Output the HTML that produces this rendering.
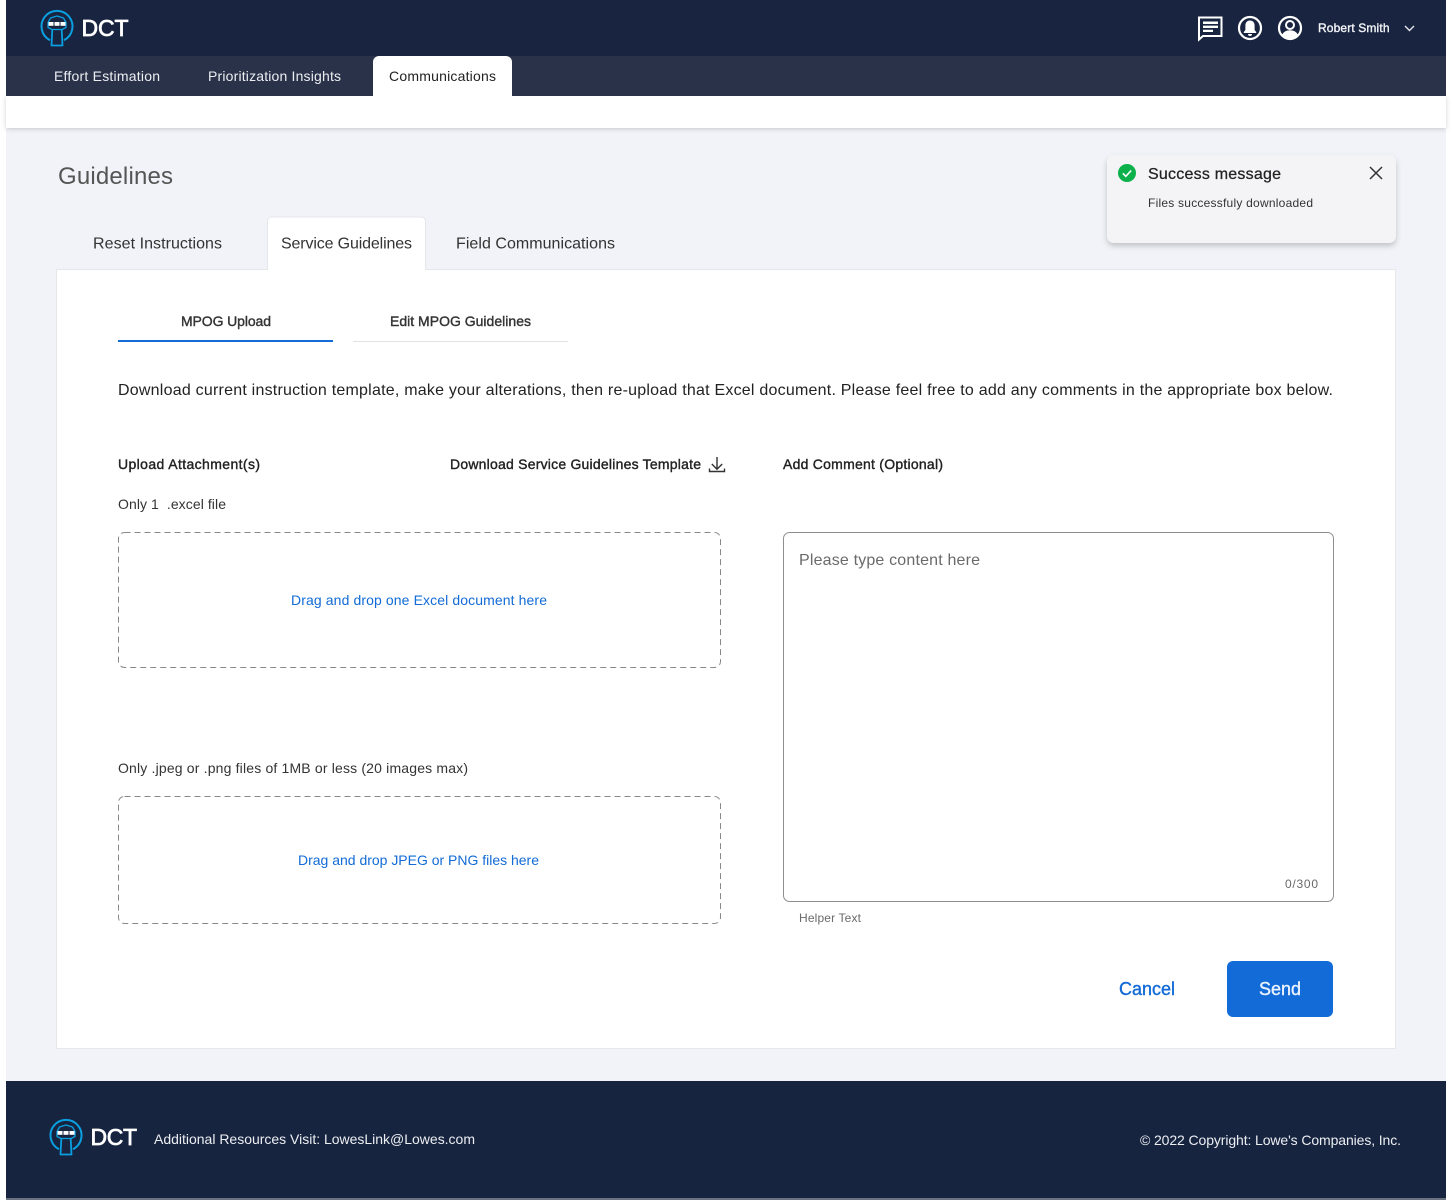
<!DOCTYPE html>
<html lang="en"><head><meta charset="utf-8"><title>Guidelines</title>
<style>
html,body{margin:0;padding:0;background:#fff;width:1452px;height:1200px;overflow:hidden}
body{position:relative;font-family:"Liberation Sans",sans-serif}
svg{position:absolute;left:0;top:0}
text{font-family:"Liberation Sans",sans-serif;white-space:pre}
.m{stroke:currentColor;stroke-width:.25px}
.b{stroke:currentColor;stroke-width:.38px}
.d{stroke:currentColor;stroke-width:.7px}
</style></head><body>
<svg width="1452" height="1200" viewBox="0 0 1452 1200" xmlns="http://www.w3.org/2000/svg">
<defs>
<filter id="s1" x="-5%" y="-50%" width="110%" height="200%"><feDropShadow dx="0" dy="1" stdDeviation="2.5" flood-color="#000" flood-opacity=".18"/></filter>
<filter id="s2" x="-10%" y="-20%" width="120%" height="150%"><feDropShadow dx="0" dy="3" stdDeviation="3" flood-color="#000" flood-opacity=".2"/></filter>
<g id="logo">
<path d="M-7 14.200A15.500 15.500 0 1 1 7 14.200" fill="none" stroke="#0a9fe0" stroke-width="2"/>
<path d="M-4.500 0H4.500L5.500 19.500H-5.500Z" fill="#182440" stroke="#0a9fe0" stroke-width="1.800" stroke-linejoin="round"/>
<path d="M-9 -3.500L-6.500 -8L0 -10L6.500 -8L9 -3.500V1.500L5 3.500H-5L-9 1.500Z" fill="#182440" stroke="#0a9fe0" stroke-width="1.300" stroke-linejoin="round"/>
<rect x="-8.500" y="-4" width="5" height="3.800" fill="#fff"/><rect x="-2.500" y="-4" width="5" height="3.800" fill="#fff"/><rect x="3.500" y="-4" width="5" height="3.800" fill="#fff"/>
</g>
</defs>
<rect x="6" y="0" width="1440" height="1200" fill="#f1f3f8"/>
<rect x="6" y="0" width="1440" height="56" fill="#182440"/>
<rect x="6" y="96" width="1440" height="32" fill="#fff" filter="url(#s1)"/>
<rect x="6" y="56" width="1440" height="40" fill="#293248"/>
<path d="M373 96V62a6 6 0 0 1 6-6H506a6 6 0 0 1 6 6V96Z" fill="#fff"/>

<use href="#logo" x="57" y="26"/>
<text class="d" x="81.500" y="36" font-size="23" fill="#fff" color="#fff" textLength="47">DCT</text>
<text x="54" y="81" font-size="14" fill="#eceef2" textLength="106">Effort Estimation</text>
<text x="208" y="81" font-size="14" fill="#eceef2" textLength="133">Prioritization Insights</text>
<text x="389" y="81" font-size="14" fill="#222" textLength="107">Communications</text>

<!-- header icons -->
<path d="M1199 17.500H1221.500V36H1203L1199 39.500Z" fill="none" stroke="#fff" stroke-width="2"/>
<path d="M1203 21.500H1218V24H1203ZM1203 25.600H1218V28H1203ZM1203 29.800H1213V32H1203Z" fill="#fff"/>
<circle cx="1250" cy="28" r="11" fill="none" stroke="#fff" stroke-width="2.200"/>
<path d="M1250 20.500c-3 0-4.600 2.200-4.600 5V30l-1.600 2V33h12.400V32l-1.600-2V25.500c0-2.800-1.600-5-4.600-5ZM1248 34h4a2 2 0 0 1-4 0Z" fill="#fff"/>
<circle cx="1290" cy="28" r="11" fill="none" stroke="#fff" stroke-width="2.200"/>
<circle cx="1290" cy="25" r="4" fill="none" stroke="#fff" stroke-width="2"/>
<path d="M1282 35c1.500-3.500 4.500-4.800 8-4.800s6.500 1.300 8 4.800c-2 2.300-5 4-8 4s-6-1.700-8-4Z" fill="#fff"/>
<text class="b" x="1318" y="32" font-size="12" fill="#f2f3f5" color="#f2f3f5" textLength="71.500">Robert Smith</text>
<path d="M1405 26l4.500 4.500 4.500-4.500" fill="none" stroke="#e6e8ee" stroke-width="1.400"/>

<text x="58" y="184" font-size="24" fill="#555" textLength="115">Guidelines</text>

<!-- main panel -->
<rect x="56.500" y="269.500" width="1339" height="779" fill="#fff" stroke="#e6e7ea"/>
<path d="M267.500 270V221a4 4 0 0 1 4-4H421.500a4 4 0 0 1 4 4V270" fill="#fff" stroke="#e6e7ea"/>
<rect x="268" y="268" width="157" height="3" fill="#fff"/>
<text x="93" y="248.500" font-size="16" fill="#333" textLength="129">Reset Instructions</text>
<text x="281" y="248.500" font-size="16" fill="#333" textLength="131">Service Guidelines</text>
<text x="456" y="248.500" font-size="16" fill="#333" textLength="159">Field Communications</text>

<text class="b" x="181" y="326" font-size="14" fill="#333" color="#333" textLength="90">MPOG Upload</text>
<text class="b" x="390" y="326" font-size="14" fill="#333" color="#333" textLength="141">Edit MPOG Guidelines</text>
<rect x="118" y="340" width="215" height="2" fill="#126bd6"/>
<rect x="353" y="341" width="215" height="1" fill="#e2e3e6"/>

<text x="118" y="395" font-size="16" fill="#222" textLength="1215">Download current instruction template, make your alterations, then re-upload that Excel document. Please feel free to add any comments in the appropriate box below.</text>

<text class="b" x="118" y="469" font-size="14" fill="#222" color="#222" textLength="142">Upload Attachment(s)</text>
<text class="b" x="450" y="469" font-size="14" fill="#222" color="#222" textLength="251">Download Service Guidelines Template</text>
<path d="M717 457V469M711.800 464l5.200 5.200 5.200-5.200M709.500 468.500V471.500H724.500V468.500" fill="none" stroke="#333" stroke-width="1.400"/>
<text class="b" x="783" y="469" font-size="14" fill="#222" color="#222" textLength="160">Add Comment (Optional)</text>

<text x="118" y="509" font-size="14" fill="#333" textLength="108">Only 1  .excel file</text>
<rect x="118.500" y="532.500" width="602" height="135" rx="6" fill="#fff" stroke="#888" stroke-dasharray="6 4"/>
<text x="291" y="605" font-size="14" fill="#126bd6" textLength="256">Drag and drop one Excel document here</text>

<text x="118" y="773" font-size="14" fill="#333" textLength="350">Only .jpeg or .png files of 1MB or less (20 images max)</text>
<rect x="118.500" y="796.500" width="602" height="127" rx="6" fill="#fff" stroke="#888" stroke-dasharray="6 4"/>
<text x="298" y="865" font-size="14" fill="#126bd6" textLength="241">Drag and drop JPEG or PNG files here</text>

<rect x="783.500" y="532.500" width="550" height="369" rx="6" fill="#fff" stroke="#8e8e8e"/>
<text x="799" y="565" font-size="16" fill="#6a6a6a" textLength="181">Please type content here</text>
<text x="1285" y="888" font-size="12" fill="#6a6a6a" textLength="33">0/300</text>
<text x="799" y="922" font-size="12" fill="#6a6a6a" textLength="62">Helper Text</text>

<text class="b" x="1119" y="995" font-size="18" fill="#126bd6" color="#126bd6" textLength="56">Cancel</text>
<rect x="1227" y="961" width="106" height="56" rx="6" fill="#126bd6"/>
<text class="b" x="1259" y="995" font-size="18" fill="#eaf2ff" color="#eaf2ff" textLength="42">Send</text>

<!-- toast -->
<rect x="1107" y="155" width="289" height="88" rx="7" fill="#f4f4f6" filter="url(#s2)"/>
<circle cx="1127" cy="173" r="9" fill="#0cb14b"/>
<path d="M1122.800 173.300l3 3 5.400-5.800" fill="none" stroke="#fff" stroke-width="1.600"/>
<text class="m" x="1148" y="179" font-size="16" fill="#222" color="#222" textLength="133">Success message</text>
<text x="1148" y="207" font-size="12" fill="#333" textLength="165">Files successfuly downloaded</text>
<path d="M1370 167l12 12M1382 167l-12 12" fill="none" stroke="#333" stroke-width="1.500"/>

<!-- footer -->
<rect x="6" y="1081" width="1440" height="117" fill="#16243f"/>
<rect x="6" y="1198" width="1440" height="2" fill="#6b7380"/>
<use href="#logo" x="66" y="1135"/>
<text class="d" x="90.500" y="1145" font-size="23" fill="#fff" color="#fff" textLength="46.500">DCT</text>
<text x="154" y="1144" font-size="14" fill="#eceef2" textLength="321">Additional Resources Visit: LowesLink@Lowes.com</text>
<text x="1140" y="1145" font-size="14" fill="#eceef2" textLength="261">© 2022 Copyright: Lowe's Companies, Inc.</text>
</svg>
</body></html>
